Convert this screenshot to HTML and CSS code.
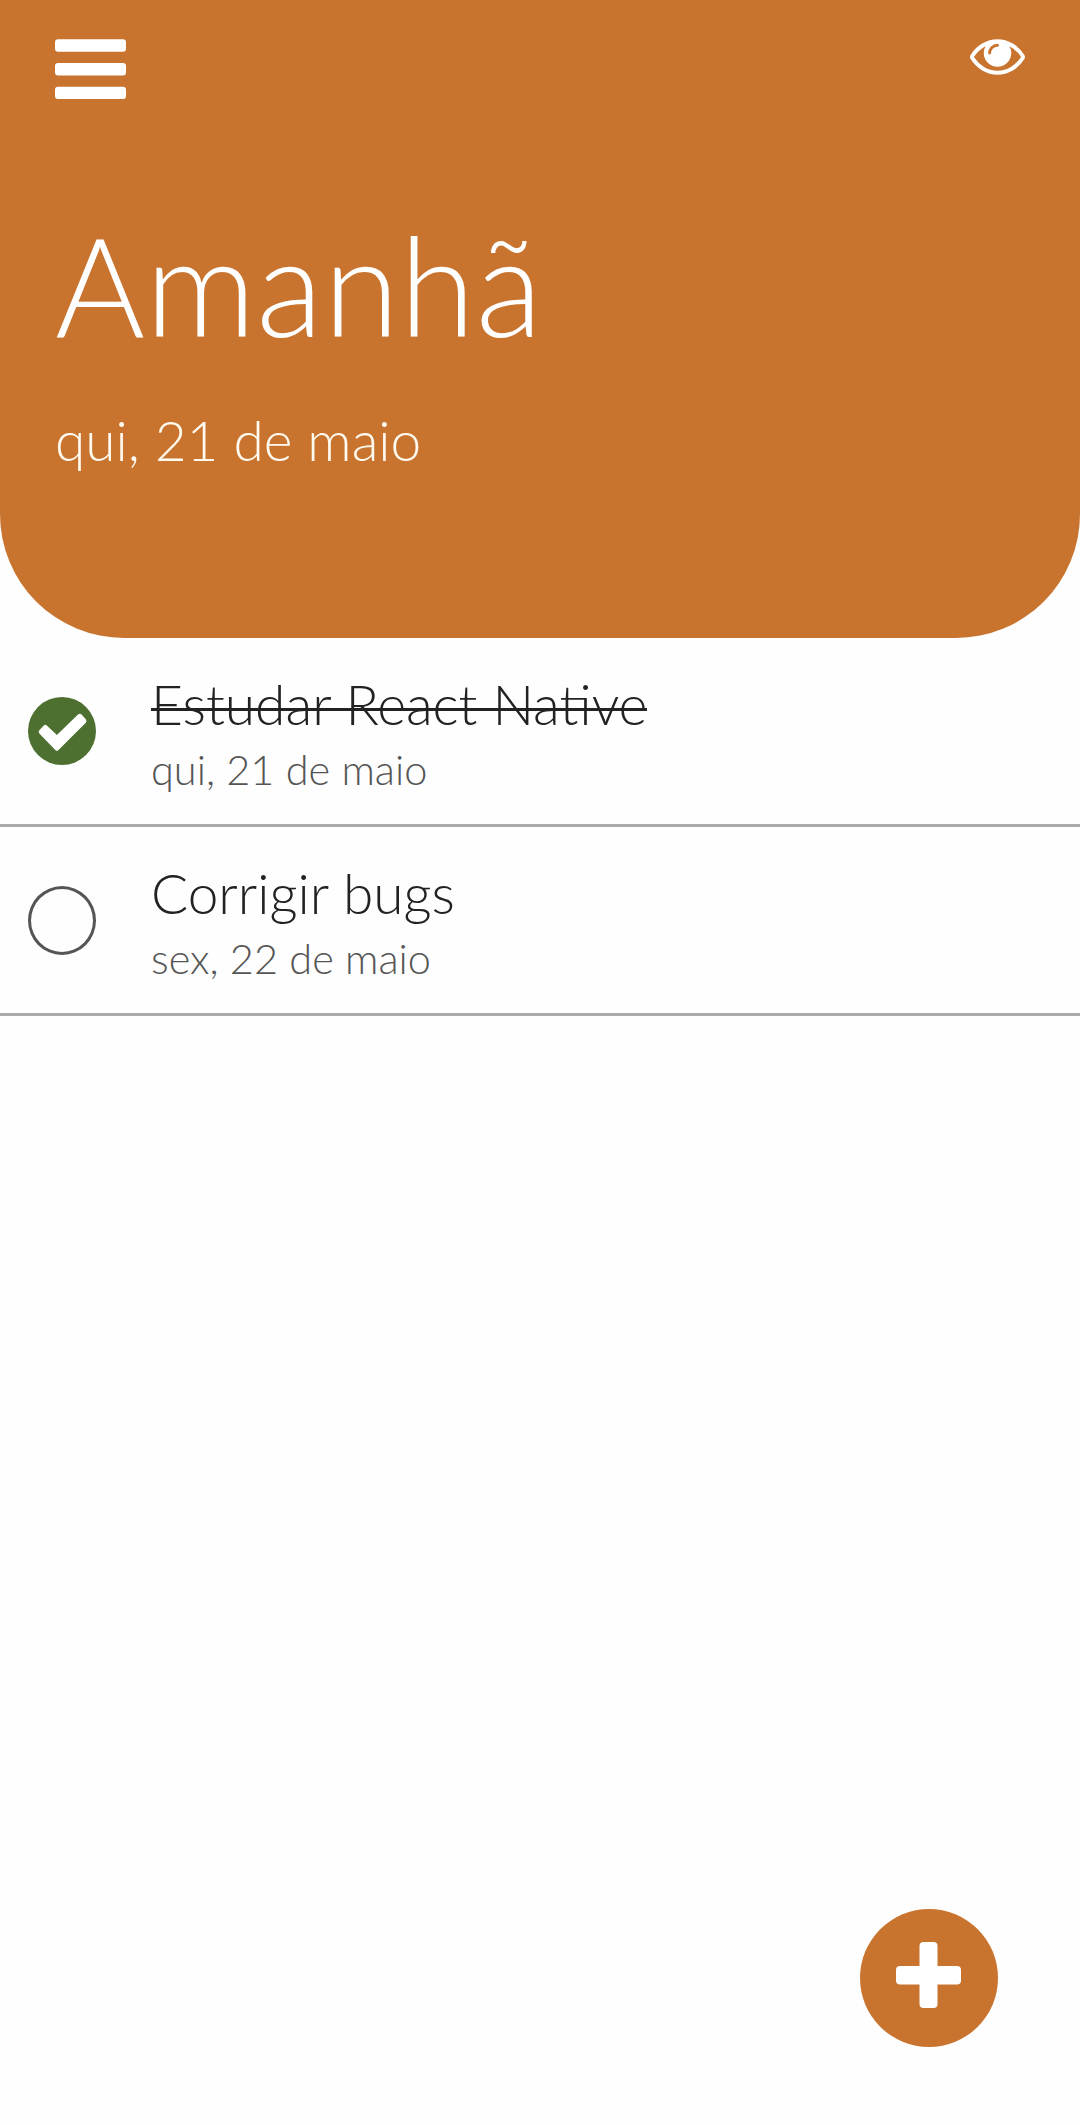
FILE: index.html
```html
<!DOCTYPE html>
<html lang="pt-BR">
<head>
<meta charset="utf-8">
<title>Amanhã</title>
<link rel="stylesheet" href="styles.css">
</head>
<body>
<header class="header">
  <div class="toolbar">
    <svg class="menu" viewBox="0 0 71 60"><g fill="#fff"><rect y=".3" width="71" height="12.4" rx="3"/><rect y="24" width="71" height="12.4" rx="3"/><rect y="47.8" width="71" height="12.2" rx="3"/></g></svg>
    <svg class="eye" viewBox="0 0 1792 1152"><path fill="#fff" d="M1664 576q-152-236-381-353 61 104 61 225 0 185-131.500 316.500t-316.500 131.500-316.500-131.500-131.500-316.500q0-121 61-225-229 117-381 353 133 205 333.500 326.500t434.500 121.500 434.500-121.500 333.500-326.500zm-720-384q0-20-14-34t-34-14q-125 0-214.500 89.500t-89.500 214.500q0 20 14 34t34 14 34-14 14-34q0-86 61-147t147-61q20 0 34-14t14-34zm848 384q0 34-20 69-140 230-376.500 368.500t-499.500 138.500-499.500-139-376.500-368q-20-35-20-69t20-69q140-229 376.500-368t499.500-139 499.500 139 376.500 368q20 35 20 69z"/></svg>
  </div>
  <h1 class="title">Amanhã</h1>
  <p class="subtitle">qui, 21 de maio</p>
</header>
<main class="tasks">
  <article class="task">
    <svg class="check" viewBox="0 0 68 68"><circle cx="34" cy="34" r="34" fill="#4d7031"/><path fill="#fff" d="M11.300 33.200L15.800 28.400Q17.300 26.900 18.800 28.400L28.900 38L50 17.600Q51.800 15.900 53.600 17.600L57.800 22.300Q59.300 24 57.800 25.800L30.500 53Q28.900 54.700 27.300 53L11.300 36.500Q9.900 34.800 11.300 33.200Z"/></svg>
    <div class="info"><h2 class="name"><s class="done">Estudar React Native</s></h2><p class="date">qui, 21 de maio</p></div>
  </article>
  <article class="task">
    <span class="check pending"></span>
    <div class="info"><h2 class="name">Corrigir bugs</h2><p class="date">sex, 22 de maio</p></div>
  </article>
</main>
<button class="add" aria-label="Adicionar"><svg class="plus" viewBox="0 0 65 66"><path fill="#fff" d="M27.500 0h10q4 0 4 4v20h19.500q4 0 4 4v10.500q0 4-4 4H41.500v19.500q0 4-4 4h-10q-4 0-4-4V42.500H4q-4 0-4-4V28q0-4 4-4h19.500V4q0-4 4-4z"/></svg></button>
</body>
</html>
```
FILE: styles.css
```css
* { box-sizing: border-box; margin: 0; }
body { min-height: 2125px; background: #fefefe; font-family: Lato, sans-serif; font-weight: 300; display: flex; flex-direction: column; }
.header { height: 638px; background: #c9742e; border-radius: 0 0 124px 124px; padding: 39px 55px 0; color: #fff; }
.toolbar { display: flex; justify-content: space-between; height: 176px; }
.menu { width: 71px; height: 60px; }
.eye { width: 55px; height: 36px; }
.title { font-size: 137.5px; font-weight: 300; line-height: 138px; letter-spacing: .5px; }
.subtitle { font-size: 55px; line-height: 66px; margin-top: 54px; color: #fffaf0; }
.task { height: 189px; border-bottom: 3px solid #aaa; display: flex; align-items: center; padding-left: 28px; }
.check { width: 68px; height: 68px; }
.pending { height: 69px; border: 3px solid #555; border-radius: 50%; }
.info { margin-left: 55px; padding-top: 2px; }
.name { font-size: 55px; line-height: 66px; font-weight: 300; color: #222; }
.done { display: inline-block; text-decoration: none; font-variant-ligatures: common-ligatures; letter-spacing: 0; font-size: 55.15px; background: linear-gradient(#222, #222) 0 37px / 100% 3px no-repeat; }
.date { font-size: 41.5px; line-height: 50px; color: #555; margin-top: 7px; }
.add { margin: auto 82px 78px auto; width: 138px; height: 138px; border: 0; border-radius: 50%; background: #c9742e; display: flex; align-items: center; justify-content: center; padding: 0 1px 6px 0; }
.plus { width: 65px; height: 66px; }
```
